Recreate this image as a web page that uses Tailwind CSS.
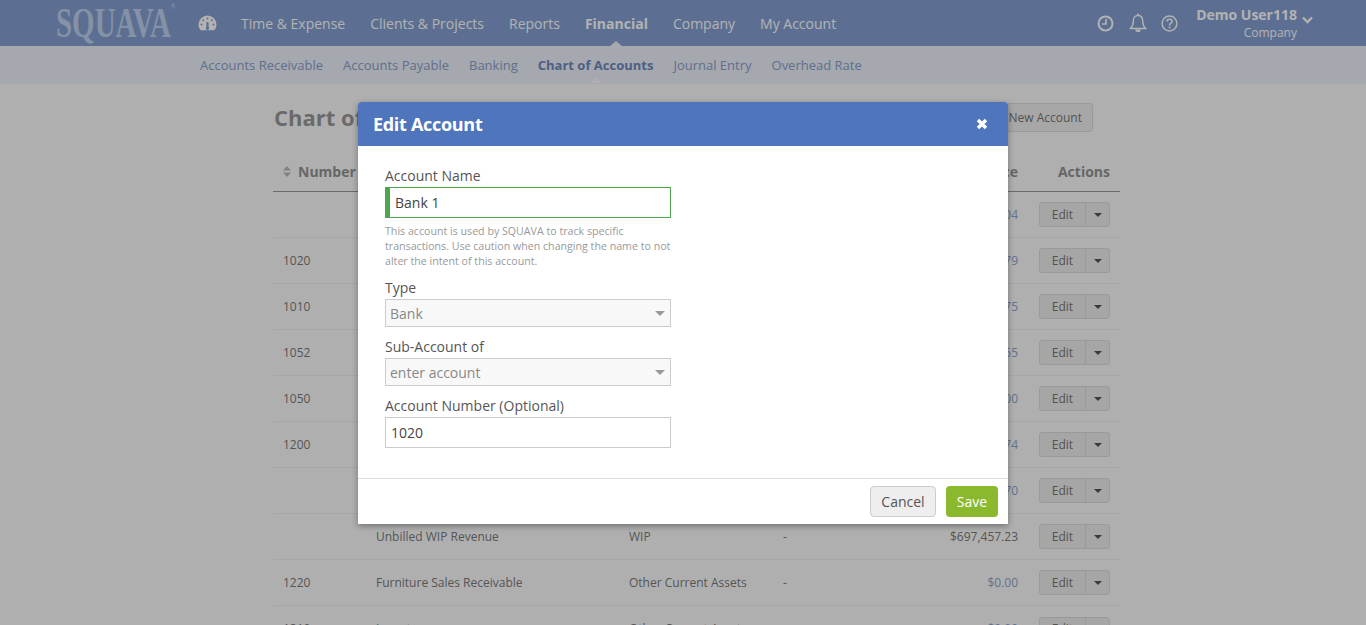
<!DOCTYPE html>
<html lang="en">
<head>
  <meta charset="UTF-8" />
  <title>Chart of Accounts</title>
  <script src="https://cdn.jsdelivr.net/npm/@tailwindcss/browser@4"></script>
</head>
<body class="h-[625px] overflow-hidden relative bg-[#fbfbfb] font-['Open_Sans',sans-serif] text-[#7a7a7a]">

  <!-- top nav -->
  <header class="h-[46px] bg-[#849fd2] flex items-center text-white">
    <div class="w-[198px] pl-[56px] shrink-0 flex items-start">
      <span class="font-['Liberation_Serif',serif] font-bold text-[42px] leading-none text-[#bdd0ee] inline-block origin-left scale-x-[0.69] whitespace-nowrap">SQUAVA<sup class="text-[8px] align-[24px]">®</sup></span>
    </div>
    <svg class="w-[19px] h-[16px] shrink-0" viewBox="0 0 19 16" fill="#fff"><path d="M9.5 0.5A9 9 0 0 0 0.5 9.5c0 2.3.8 4.3 2.2 5.8h13.6a9 9 0 0 0 2.2-5.8 9 9 0 0 0-9-9z"/><g fill="#849fd2"><circle cx="9.5" cy="3.5" r="1"/><circle cx="5.2" cy="5.2" r="1"/><circle cx="13.8" cy="5.2" r="1"/><circle cx="3.5" cy="9.5" r="1"/><circle cx="15.5" cy="9.5" r="1"/><path d="M8.5 7h2l.2 5.2a1.6 1.6 0 1 1-2.4 0z"/></g></svg>
    <nav class="flex items-center gap-[25px] ml-[24px] text-[14px]">
      <a>Time &amp; Expense</a>
      <a>Clients &amp; Projects</a>
      <a>Reports</a>
      <a class="font-bold relative">Financial<span class="absolute left-1/2 -translate-x-1/2 top-[28px] w-0 h-0 border-x-[6px] border-x-transparent border-b-[5px] border-b-[#ecf1fa]"></span></a>
      <a>Company</a>
      <a>My Account</a>
    </nav>
    <div class="ml-auto flex items-center">
      <svg class="w-[17px] h-[17px]" viewBox="0 0 17 17" fill="none" stroke="#fff" stroke-width="2"><circle cx="8.5" cy="8.5" r="7"/><path d="M9 4v5H5" stroke-width="1.6"/></svg>
      <svg class="w-[18px] h-[20px] ml-[15px]" viewBox="0 0 18 20" fill="none" stroke="#fff" stroke-width="1.4"><path d="M9 2.5c-3 0-4.6 2.2-4.6 5 0 4-1 6-2.9 8h15c-1.9-2-2.900-4-2.900-8 0-2.800-1.600-5-4.600-5z"/><path d="M9 .5v2" stroke-width="1.800"/><path d="M7 16.500a2 2 0 0 0 4 0" fill="#fff"/></svg>
      <svg class="w-[17px] h-[17px] ml-[14px]" viewBox="0 0 17 17" fill="none" stroke="#fff" stroke-width="1.500"><circle cx="8.500" cy="8.500" r="7.400"/><path d="M6 6.500c0-1.500 1.200-2.300 2.500-2.300s2.500.8 2.500 2.200c0 2-2.500 2-2.500 4" stroke-width="1.600"/><path d="M8.500 11.500v1.800" stroke-width="1.800"/></svg>
      <div class="ml-[18px] pt-[2px] text-right">
        <div class="text-[14px] leading-[18px] font-bold">Demo User118</div>
        <div class="text-[12px] leading-[18px]">Company</div>
      </div>
      <svg class="w-[11px] h-[8px] ml-[5px] mr-[53px] mb-[6px]" viewBox="0 0 11 8" fill="none" stroke="#fff" stroke-width="2.400"><path d="M1 1.500l4.500 4.500 4.500-4.500"/></svg>
    </div>
  </header>

  <!-- sub nav -->
  <div class="h-[38px] bg-[#ecf1fa] flex items-center pt-[2px] pl-[200px] gap-[20px] text-[13px] text-[#8ba0cb]">
    <a>Accounts Receivable</a>
    <a>Accounts Payable</a>
    <a>Banking</a>
    <a class="font-bold text-[#7088bd] relative">Chart of Accounts<span class="absolute left-1/2 -translate-x-1/2 top-[22px] w-0 h-0 border-x-[6px] border-x-transparent border-b-[5px] border-b-[#fbfbfb]"></span></a>
    <a>Journal Entry</a>
    <a>Overhead Rate</a>
  </div>

  <!-- page -->
  <main class="w-[847px] ml-[273px]">
    <div class="flex justify-between items-start pt-[19px] pr-[27px] h-[69px]">
      <h1 class="text-[22px] leading-[28px] pl-[1px] font-bold text-[#999]">Chart of</h1>
      <button class="h-[29px] pl-[16px] pr-[10px] border border-[#ddd] rounded-[3px] bg-[#f0f0f0] text-[12px] text-[#777]">New Account</button>
    </div>
    <div class="h-[39px] grid grid-cols-[93px_253px_154px_1fr_102px] items-center pb-[1px] border-b border-b-[#999] text-[14px] font-bold text-[#939393]">
      <div class="flex items-center pl-[10px] gap-[7px]">
        <svg class="w-[8px] h-[11px]" viewBox="0 0 8 11" fill="#bbb"><path d="M4 0l4 4.500H0zM4 11L0 6.500h8z"/></svg>
        Number
      </div>
      <div></div><div></div>
      <div class="text-right">Balance</div>
      <div class="text-right pr-[10px]">Actions</div>
    </div>

    <div class="text-[12px]">
      <div class="h-[46px] grid grid-cols-[93px_253px_154px_1fr_102px] items-center border-b border-b-[#eee]">
        <div class="pl-[10px]"></div><div class="pl-[10px]"></div><div class="pl-[10px]"></div>
        <div class="text-right text-[#8ea3cc]">04</div>
        <div class="flex justify-end pr-[10px]"><div class="flex h-[25px] w-[71px] border border-[#ddd] rounded-[3px] bg-[#eee] text-[#777]"><span class="flex-1 flex items-center justify-center border-r border-r-[#ddd]">Edit</span><span class="w-[23px] flex items-center justify-center"><i class="w-0 h-0 border-x-[4px] border-x-transparent border-t-[4px] border-t-[#555]"></i></span></div></div>
      </div>
      <div class="h-[46px] grid grid-cols-[93px_253px_154px_1fr_102px] items-center border-b border-b-[#eee]">
        <div class="pl-[10px]">1020</div><div class="pl-[10px]"></div><div class="pl-[10px]"></div>
        <div class="text-right text-[#8ea3cc]">79</div>
        <div class="flex justify-end pr-[10px]"><div class="flex h-[25px] w-[71px] border border-[#ddd] rounded-[3px] bg-[#eee] text-[#777]"><span class="flex-1 flex items-center justify-center border-r border-r-[#ddd]">Edit</span><span class="w-[23px] flex items-center justify-center"><i class="w-0 h-0 border-x-[4px] border-x-transparent border-t-[4px] border-t-[#555]"></i></span></div></div>
      </div>
      <div class="h-[46px] grid grid-cols-[93px_253px_154px_1fr_102px] items-center border-b border-b-[#eee]">
        <div class="pl-[10px]">1010</div><div class="pl-[10px]"></div><div class="pl-[10px]"></div>
        <div class="text-right text-[#8ea3cc]">75</div>
        <div class="flex justify-end pr-[10px]"><div class="flex h-[25px] w-[71px] border border-[#ddd] rounded-[3px] bg-[#eee] text-[#777]"><span class="flex-1 flex items-center justify-center border-r border-r-[#ddd]">Edit</span><span class="w-[23px] flex items-center justify-center"><i class="w-0 h-0 border-x-[4px] border-x-transparent border-t-[4px] border-t-[#555]"></i></span></div></div>
      </div>
      <div class="h-[46px] grid grid-cols-[93px_253px_154px_1fr_102px] items-center border-b border-b-[#eee]">
        <div class="pl-[10px]">1052</div><div class="pl-[10px]"></div><div class="pl-[10px]"></div>
        <div class="text-right text-[#8ea3cc]">65</div>
        <div class="flex justify-end pr-[10px]"><div class="flex h-[25px] w-[71px] border border-[#ddd] rounded-[3px] bg-[#eee] text-[#777]"><span class="flex-1 flex items-center justify-center border-r border-r-[#ddd]">Edit</span><span class="w-[23px] flex items-center justify-center"><i class="w-0 h-0 border-x-[4px] border-x-transparent border-t-[4px] border-t-[#555]"></i></span></div></div>
      </div>
      <div class="h-[46px] grid grid-cols-[93px_253px_154px_1fr_102px] items-center border-b border-b-[#eee]">
        <div class="pl-[10px]">1050</div><div class="pl-[10px]"></div><div class="pl-[10px]"></div>
        <div class="text-right text-[#8ea3cc]">00</div>
        <div class="flex justify-end pr-[10px]"><div class="flex h-[25px] w-[71px] border border-[#ddd] rounded-[3px] bg-[#eee] text-[#777]"><span class="flex-1 flex items-center justify-center border-r border-r-[#ddd]">Edit</span><span class="w-[23px] flex items-center justify-center"><i class="w-0 h-0 border-x-[4px] border-x-transparent border-t-[4px] border-t-[#555]"></i></span></div></div>
      </div>
      <div class="h-[46px] grid grid-cols-[93px_253px_154px_1fr_102px] items-center border-b border-b-[#eee]">
        <div class="pl-[10px]">1200</div><div class="pl-[10px]"></div><div class="pl-[10px]"></div>
        <div class="text-right text-[#8ea3cc]">74</div>
        <div class="flex justify-end pr-[10px]"><div class="flex h-[25px] w-[71px] border border-[#ddd] rounded-[3px] bg-[#eee] text-[#777]"><span class="flex-1 flex items-center justify-center border-r border-r-[#ddd]">Edit</span><span class="w-[23px] flex items-center justify-center"><i class="w-0 h-0 border-x-[4px] border-x-transparent border-t-[4px] border-t-[#555]"></i></span></div></div>
      </div>
      <div class="h-[46px] grid grid-cols-[93px_253px_154px_1fr_102px] items-center border-b border-b-[#eee]">
        <div class="pl-[10px]"></div><div class="pl-[10px]"></div><div class="pl-[10px]"></div>
        <div class="text-right text-[#8ea3cc]">70</div>
        <div class="flex justify-end pr-[10px]"><div class="flex h-[25px] w-[71px] border border-[#ddd] rounded-[3px] bg-[#eee] text-[#777]"><span class="flex-1 flex items-center justify-center border-r border-r-[#ddd]">Edit</span><span class="w-[23px] flex items-center justify-center"><i class="w-0 h-0 border-x-[4px] border-x-transparent border-t-[4px] border-t-[#555]"></i></span></div></div>
      </div>
      <div class="h-[46px] grid grid-cols-[93px_253px_154px_1fr_102px] items-center border-b border-b-[#eee]">
        <div class="pl-[10px]"></div><div class="pl-[10px]">Unbilled WIP Revenue</div><div class="pl-[10px]">WIP</div>
        <div class="flex justify-between"><span class="pl-[10px]">-</span><span>$697,457.23</span></div>
        <div class="flex justify-end pr-[10px]"><div class="flex h-[25px] w-[71px] border border-[#ddd] rounded-[3px] bg-[#eee] text-[#777]"><span class="flex-1 flex items-center justify-center border-r border-r-[#ddd]">Edit</span><span class="w-[23px] flex items-center justify-center"><i class="w-0 h-0 border-x-[4px] border-x-transparent border-t-[4px] border-t-[#555]"></i></span></div></div>
      </div>
      <div class="h-[46px] grid grid-cols-[93px_253px_154px_1fr_102px] items-center border-b border-b-[#eee]">
        <div class="pl-[10px]">1220</div><div class="pl-[10px]">Furniture Sales Receivable</div><div class="pl-[10px]">Other Current Assets</div>
        <div class="flex justify-between"><span class="pl-[10px]">-</span><span class="text-[#8ea3cc]">$0.00</span></div>
        <div class="flex justify-end pr-[10px]"><div class="flex h-[25px] w-[71px] border border-[#ddd] rounded-[3px] bg-[#eee] text-[#777]"><span class="flex-1 flex items-center justify-center border-r border-r-[#ddd]">Edit</span><span class="w-[23px] flex items-center justify-center"><i class="w-0 h-0 border-x-[4px] border-x-transparent border-t-[4px] border-t-[#555]"></i></span></div></div>
      </div>
      <div class="h-[46px] grid grid-cols-[93px_253px_154px_1fr_102px] items-center">
        <div class="pl-[10px]">1210</div><div class="pl-[10px]">Inventory</div><div class="pl-[10px]">Other Current Assets</div>
        <div class="flex justify-between"><span class="pl-[10px]">-</span><span class="text-[#8ea3cc]">$0.00</span></div>
        <div class="flex justify-end pr-[10px]"><div class="flex h-[25px] w-[71px] border border-[#ddd] rounded-[3px] bg-[#eee] text-[#777]"><span class="flex-1 flex items-center justify-center border-r border-r-[#ddd]">Edit</span><span class="w-[23px] flex items-center justify-center"><i class="w-0 h-0 border-x-[4px] border-x-transparent border-t-[4px] border-t-[#555]"></i></span></div></div>
      </div>
    </div>
  </main>

  <!-- overlay + modal -->
  <div class="absolute inset-0 bg-black/30"></div>
  <div class="absolute left-[358px] top-[102px] w-[650px] h-[422px] bg-white shadow-[0_2px_6px_rgba(0,0,0,0.35)] flex flex-col rounded-t-[3px]">
    <div class="h-[44px] bg-[#4f75bd] flex items-center justify-between pl-[15px] pr-[20px] text-white rounded-t-[3px]">
      <h2 class="text-[18px] font-bold tracking-[-0.3px]">Edit Account</h2>
      <svg class="w-[12px] h-[12px]" viewBox="0 0 12 12" fill="none" stroke="#fff" stroke-width="3.400"><path d="M2 2l8 8M10 2l-8 8"/></svg>
    </div>
    <form class="flex-1 pl-[27px] w-[313px] pt-[20px] text-[14px] text-[#555]">
      <label class="block leading-[19px] mb-[2px]">Account Name</label>
      <div class="h-[31px] border border-[#4ca64c] border-l-[5px] flex items-center pl-[5px] text-[#444]">Bank 1</div>
      <p class="text-[10.65px] leading-[15px] text-[#999] mt-[6px] whitespace-nowrap">This account is used by SQUAVA to track specific<br>transactions. Use caution when changing the name to not<br>alter the intent of this account.</p>
      <label class="block leading-[19px] mt-[9px] mb-[2px]">Type</label>
      <div class="h-[28px] border border-[#ccc] bg-[#f8f8f8] flex items-center justify-between pl-[4px] pr-[5px] text-[#888]">Bank<i class="w-0 h-0 border-x-[5px] border-x-transparent border-t-[5px] border-t-[#999]"></i></div>
      <label class="block leading-[19px] mt-[10px] mb-[2px]">Sub-Account of</label>
      <div class="h-[28px] border border-[#ccc] bg-[#f8f8f8] flex items-center justify-between pl-[4px] pr-[5px] text-[#888]">enter account<i class="w-0 h-0 border-x-[5px] border-x-transparent border-t-[5px] border-t-[#999]"></i></div>
      <label class="block leading-[19px] mt-[10px] mb-[2px]">Account Number (Optional)</label>
      <div class="h-[31px] border border-[#ccc] flex items-center pl-[5px] text-[#444]">1020</div>
    </form>
    <div class="h-[46px] border-t border-t-[#ddd] flex items-center justify-end gap-[10px] pr-[10px] text-[14px]">
      <button class="w-[66px] h-[31px] rounded-[4px] border border-[#ccc] bg-[#eee] text-[#555]">Cancel</button>
      <button class="w-[52px] h-[31px] rounded-[4px] bg-[#8ab92d] text-white font-medium">Save</button>
    </div>
  </div>
</body>
</html>
